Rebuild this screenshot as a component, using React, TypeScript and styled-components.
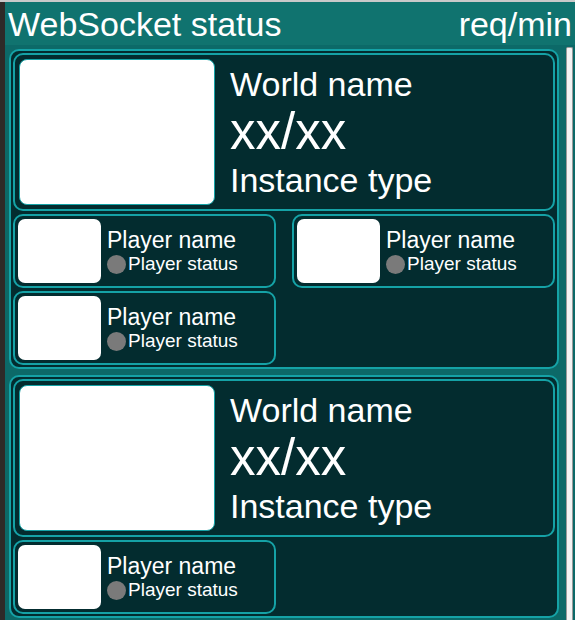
import { createGlobalStyle, styled } from 'styled-components';

const GlobalStyle = createGlobalStyle`
  html, body {
    margin: 0;
    padding: 0;
  }
  body {
    background: #2e2a28;
    border-top: 2px solid #c9c9c9;
    font-family: 'Liberation Sans', Arial, sans-serif;
    color: #fff;
    overflow: hidden;
  }
`;

interface World {
  players: number;
}

const worlds: World[] = [{ players: 3 }, { players: 1 }];

export default function App() {
  return (
    <>
      <GlobalStyle />
      <Page>
        <Header>
          <span>WebSocket status</span>
          <span>req/min</span>
        </Header>
        <Body>
          <List>
            {worlds.map((w, i) => (
              <WorldCard key={i}>
                <WorldHeader>
                  <WorldImage />
                  <WorldInfo>
                    <WorldName>World name</WorldName>
                    <Count>xx/xx</Count>
                    <WorldName>Instance type</WorldName>
                  </WorldInfo>
                </WorldHeader>
                <PlayerGrid>
                  {Array.from({ length: w.players }).map((_, j) => (
                    <PlayerCard key={j}>
                      <PlayerImage />
                      <PlayerInfo>
                        <PlayerName>Player name</PlayerName>
                        <PlayerStatus>
                          <StatusDot />
                          Player status
                        </PlayerStatus>
                      </PlayerInfo>
                    </PlayerCard>
                  ))}
                </PlayerGrid>
              </WorldCard>
            ))}
          </List>
          <ScrollTrack>
            <ScrollThumb />
          </ScrollTrack>
        </Body>
      </Page>
    </>
  );
}

const Page = styled.div`
  height: 618px;
  margin-left: 5px;
  display: flex;
  flex-direction: column;
  background: #0c6968;
`;

const Header = styled.div`
  height: 43px;
  flex-shrink: 0;
  display: flex;
  align-items: center;
  justify-content: space-between;
  padding: 0 3px;
  background: #10736f;
  font-size: 34px;
  line-height: 1;
`;

const Body = styled.div`
  flex: 1;
  min-height: 0;
  display: flex;
`;

const List = styled.div`
  flex: 1;
  overflow: hidden;
  padding: 4px 2px 0 4px;
  display: flex;
  flex-direction: column;
  gap: 6px;
`;

const ScrollTrack = styled.div`
  width: 14px;
  flex-shrink: 0;
  padding: 2px 2px 0 5px;
  box-sizing: border-box;
  display: flex;
`;

const ScrollThumb = styled.div`
  flex: 1;
  background: #f3f3f3;
  border: 1px solid #9a9a9a;
  border-bottom: none;
  border-radius: 2px 2px 0 0;
`;

const WorldCard = styled.div`
  flex-shrink: 0;
  border: 2px solid #15a2a6;
  border-radius: 10px;
  padding: 2px;
  background: #032c2f;
  display: flex;
  flex-direction: column;
  gap: 3px;
`;

const WorldHeader = styled.div`
  border: 2px solid #15a2a6;
  border-radius: 10px;
  padding: 4px;
  display: flex;
  align-items: center;
  gap: 15px;
`;

const WorldImage = styled.div`
  width: 196px;
  height: 146px;
  box-sizing: border-box;
  flex-shrink: 0;
  background: #fff;
  border: 1px solid #15a2a6;
  border-radius: 8px;
`;

const WorldInfo = styled.div`
  display: flex;
  flex-direction: column;
`;

const WorldName = styled.div`
  font-size: 34px;
  line-height: 38px;
`;

const Count = styled.div`
  font-size: 51px;
  line-height: 58px;
`;

const PlayerGrid = styled.div`
  display: grid;
  grid-template-columns: 1fr 1fr;
  gap: 3px 16px;
`;

const PlayerCard = styled.div`
  border: 2px solid #15a2a6;
  border-radius: 10px;
  padding: 3px;
  display: flex;
  align-items: center;
  gap: 6px;
`;

const PlayerImage = styled.div`
  width: 83px;
  height: 64px;
  flex-shrink: 0;
  background: #fff;
  border-radius: 7px;
`;

const PlayerInfo = styled.div`
  display: flex;
  flex-direction: column;
`;

const PlayerName = styled.div`
  font-size: 23px;
  line-height: 26px;
`;

const PlayerStatus = styled.div`
  display: flex;
  align-items: center;
  gap: 2px;
  font-size: 19px;
  line-height: 22px;
`;

const StatusDot = styled.span`
  width: 19px;
  height: 19px;
  border-radius: 50%;
  background: #7a7a7a;
`;
